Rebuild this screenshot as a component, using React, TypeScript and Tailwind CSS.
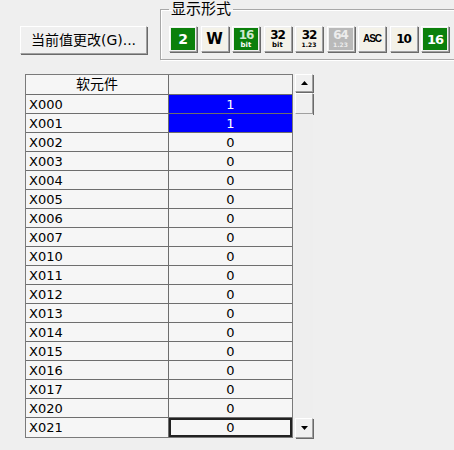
import React from "react";

const rows = [
  "X000","X001","X002","X003","X004","X005","X006","X007","X010",
  "X011","X012","X013","X014","X015","X016","X017","X020","X021",
];

const FONT = { fontFamily: '"DejaVu Sans", "Noto Sans CJK SC", sans-serif' };

function FmtBtn({ kind, children }: { kind: "green" | "gray" | "plain"; children: React.ReactNode }) {
  const inner =
    kind === "green"
      ? "bg-[#0b800b] text-white"
      : kind === "gray"
      ? "bg-[#b9b9b9] text-[#ececec]"
      : "bg-[#f4f2e8] text-black";
  return (
    <div className="w-[28px] h-[26px] shrink-0 border border-t-white border-l-white border-r-[#a0a0a0] border-b-[#a0a0a0] shadow-[1px_1px_0_#6a6a6a] p-[1px] bg-[#f0f0f0]">
      <div className={`w-full h-full flex flex-col items-center justify-center leading-none font-bold ${inner}`}>
        {children}
      </div>
    </div>
  );
}

function Arrow({ up }: { up: boolean }) {
  return (
    <svg width="7" height="4" viewBox="0 0 7 4">
      {up ? <polygon points="0,4 7,4 3.5,0" fill="#000" /> : <polygon points="0,0 7,0 3.5,4" fill="#000" />}
    </svg>
  );
}

function ScrollBtn({ up, h }: { up: boolean; h: string }) {
  return (
    <div className={`${h} w-[18px] border border-t-white border-l-white border-r-[#a0a0a0] border-b-[#a0a0a0] shadow-[1px_1px_0_#6a6a6a] bg-[#f0f0f0] flex items-center justify-center`}>
      <Arrow up={up} />
    </div>
  );
}

export default function App() {
  return (
    <div className="w-[454px] h-[450px] overflow-hidden bg-[#efefef] text-black" style={FONT}>
      <div className="flex items-start pl-[20px]">
        <button className="shrink-0 mt-[26px] w-[127px] h-[28px] border border-t-white border-l-white border-r-[#a0a0a0] border-b-[#a0a0a0] shadow-[1px_1px_0_#6a6a6a] bg-[#f0f0f0] text-[14px] leading-none text-black flex items-center justify-center whitespace-nowrap">
          当前值更改(G)...
        </button>
        <fieldset className="ml-[13px] w-[320px] shrink-0 border border-[#a8a8a8] shadow-[inset_1px_1px_0_#ffffff,1px_1px_0_#ffffff] pl-[8px] pt-[8px] pb-[7px]">
          <legend className="ml-0 px-[2px] text-[15px] leading-[18px]">显示形式</legend>
          <div className="flex gap-[3.5px]">
            <FmtBtn kind="green"><span className="text-[14px]">2</span></FmtBtn>
            <FmtBtn kind="plain"><span className="text-[15px]">W</span></FmtBtn>
            <FmtBtn kind="green">
              <span className="text-[12px] leading-[11px] tracking-[-1px] text-[#cfe8cf]">16</span>
              <span className="text-[7px] leading-[8px]">bit</span>
            </FmtBtn>
            <FmtBtn kind="plain">
              <span className="text-[12px] leading-[11px] tracking-[-1px]">32</span>
              <span className="text-[7px] leading-[8px]">bit</span>
            </FmtBtn>
            <FmtBtn kind="plain">
              <span className="text-[12px] leading-[11px] tracking-[-1px]">32</span>
              <span className="text-[6px] leading-[8px]">1.23</span>
            </FmtBtn>
            <FmtBtn kind="gray">
              <span className="text-[12px] leading-[11px] tracking-[-1px]">64</span>
              <span className="text-[6px] leading-[8px]">1.23</span>
            </FmtBtn>
            <FmtBtn kind="plain"><span className="text-[10px] tracking-[-1px]" style={{ fontFamily: '"Liberation Sans", sans-serif' }}>ASC</span></FmtBtn>
            <FmtBtn kind="plain"><span className="text-[12px] tracking-[-1px]">10</span></FmtBtn>
            <FmtBtn kind="green"><span className="text-[13px] tracking-[-1px]">16</span></FmtBtn>
          </div>
        </fieldset>
      </div>

      <div className="flex items-stretch ml-[25px] mt-[14px] gap-[2px]">
        <div className="w-[268px] border border-[#7a7a7a] bg-[#f6f6f6] text-[13px]">
          <div className="flex h-[20px] border-b border-[#6e6e6e]">
            <div className="w-[143px] border-r border-[#6e6e6e] flex items-center justify-center text-[14px]">软元件</div>
            <div className="flex-1 bg-[#f2f2f2]" />
          </div>
          {rows.map((r, i) => {
            const last = i === rows.length - 1;
            const blue = i < 2;
            return (
              <div key={r} className={`flex h-[19px] ${last ? "" : "border-b border-[#6e6e6e]"}`}>
                <div className="w-[143px] border-r border-[#6e6e6e] pl-[3px] flex items-center leading-none">{r}</div>
                {blue ? (
                  <div className="flex-1 bg-[#0000ff] text-white flex items-center justify-center leading-none">1</div>
                ) : last ? (
                  <div className="flex-1 border-2 border-[#222] flex items-center justify-center leading-none">0</div>
                ) : (
                  <div className="flex-1 flex items-center justify-center leading-none">0</div>
                )}
              </div>
            );
          })}
        </div>
        <div className="w-[19px] flex flex-col">
          <ScrollBtn up h="h-[18px]" />
          <div className="mt-[1px] h-[21px] w-[18px] border border-t-white border-l-white border-r-[#a0a0a0] border-b-[#a0a0a0] shadow-[1px_1px_0_#6a6a6a] bg-[#f0f0f0]" />
          <div className="flex-1 w-[18px] bg-[#eeeeee]" />
          <ScrollBtn up={false} h="h-[20px]" />
        </div>
      </div>
    </div>
  );
}
